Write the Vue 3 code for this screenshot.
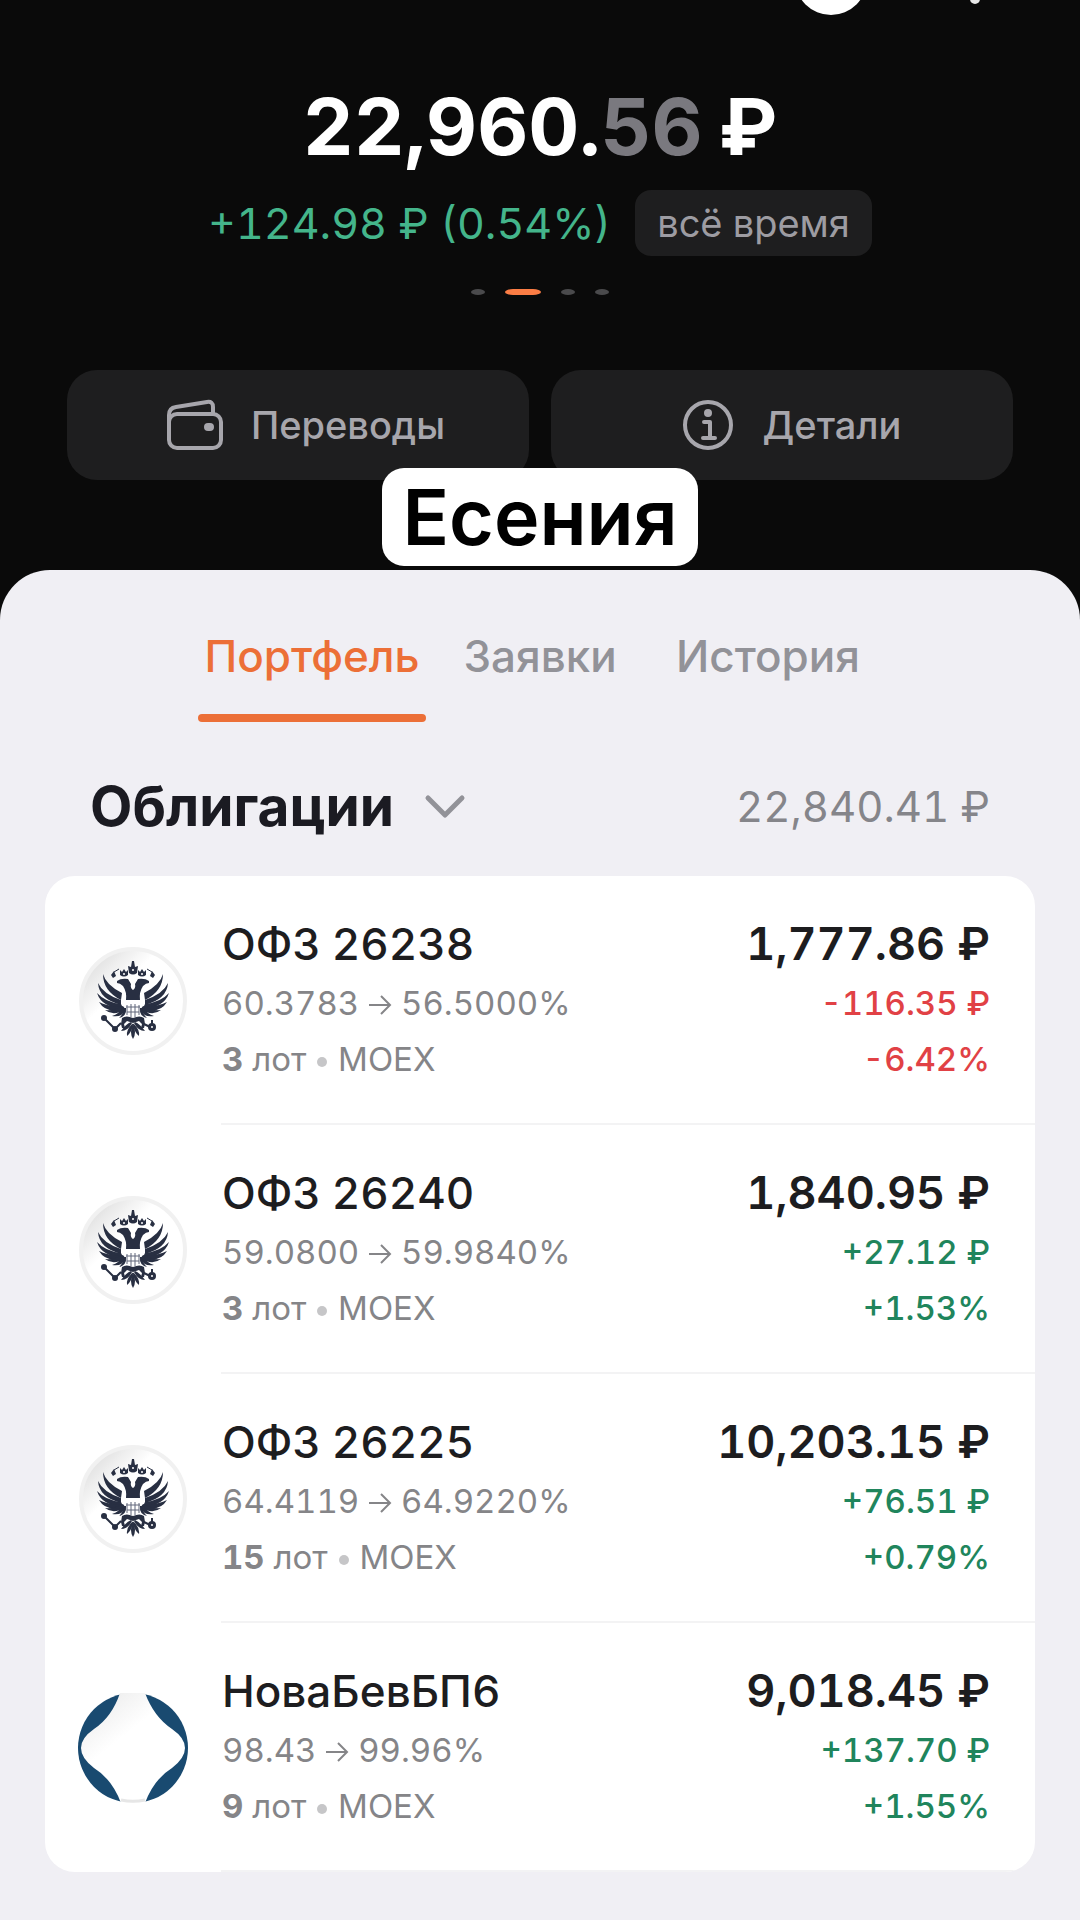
<template>
  <div class="app">
    <header class="top">
      <div class="status-bar">
        <svg width="60" height="15" viewBox="0 0 60 15">
          <circle cx="30" cy="-21" r="36" fill="#fff" />
        </svg>
        <svg width="10" height="4" viewBox="0 0 10 4">
          <circle cx="5" cy="-1" r="5" fill="#e8e8e8" />
        </svg>
      </div>

      <h1 class="balance">
        <span>22,960.<span class="cents">56</span></span>
        <span>₽</span>
      </h1>

      <div class="profit">
        <span>+124.98 ₽ (0.54%)</span>
        <button class="period" type="button">всё время</button>
      </div>

      <div class="dots">
        <span v-for="n in 4" :key="n" class="dot" :class="{ active: n === 2 }"></span>
      </div>

      <div class="actions">
        <button class="action" type="button">
          <svg class="action-icon" viewBox="0 0 56 56" fill="none" stroke="currentColor" stroke-width="4">
            <rect x="2" y="17" width="52" height="34" rx="8" />
            <path d="M2 25v-7q0-7 7-8l31-5q6-1 6 5v7" stroke-linejoin="round" />
            <rect x="37" y="26" width="10" height="8" rx="4" fill="currentColor" stroke="none" />
          </svg>
          Переводы
        </button>
        <button class="action" type="button">
          <svg class="action-icon" viewBox="0 0 56 56" fill="none" stroke="currentColor" stroke-width="4">
            <circle cx="29" cy="28" r="23" />
            <circle cx="29" cy="16" r="4" fill="currentColor" stroke="none" />
            <path d="M25 25h6v15M24 41h12" stroke-linecap="round" stroke-linejoin="round" />
          </svg>
          Детали
        </button>
      </div>

      <div class="name-tag">Есения</div>
    </header>

    <main class="sheet">
      <nav class="tabs">
        <button
          v-for="tab in tabs"
          :key="tab"
          type="button"
          class="tab"
          :class="{ active: tab === activeTab }"
          @click="activeTab = tab"
        >
          {{ tab }}
        </button>
      </nav>

      <div class="group-head">
        <button class="group-toggle" type="button" @click="opened = !opened">
          Облигации
          <svg width="42" height="26" viewBox="0 0 42 26" fill="none" stroke="#929298" stroke-width="5" stroke-linecap="round" stroke-linejoin="round">
            <path d="M4 5l17 17L38 5" />
          </svg>
        </button>
        <span class="group-total">22,840.41 ₽</span>
      </div>

      <ul v-if="opened" class="bonds">
        <li v-for="bond in bonds" :key="bond.name" class="bond">
          <svg v-if="bond.logo === 'eagle'" class="logo" viewBox="0 0 110 110">
            <defs>
              <linearGradient id="coin" x1="0.1" y1="0.1" x2="0.9" y2="0.9">
                <stop offset="0" stop-color="#dedede" />
                <stop offset="0.35" stop-color="#fff" />
              </linearGradient>
            </defs>
            <circle cx="55" cy="55" r="52" fill="url(#coin)" stroke="#f1f1f1" stroke-width="4" />
            <!-- wings, heads and crowns are mirrored around the middle -->
            <g v-for="side in mirror" :key="side" :transform="side" fill="#282f42">
              <path d="M25 28Q28 39 44 47L43 54Q25 45 25 28z" />
              <path d="M20 37Q25 48 43 54L43 59Q21 53 20 37z" />
              <path d="M19 47Q27 56 43 58L45 62Q24 62 19 47z" />
              <path d="M21 56Q30 61 44 60L46 63Q28 68 21 56z" />
              <path d="M27 64Q36 65 45 60L47 63Q36 71 27 64z" />
              <path d="M34 70Q41 68 45 61L48 63Q44 72 34 70z" />
              <path d="M41 72Q45 69 46 62L48 62Q49 70 41 72z" />
              <path d="M39 35Q43 32 50 33L53 38Q52 42 55 44V54H48Q49 46 45 40Q42 37 39 37z" />
              <path d="M42 24L44 26 46 23 48 26 50 24V29Q46 32 42 29z" />
              <path d="M33 29L36 25 38 30 35 32z" />
              <path d="M36 26L41 23" stroke="#282f42" stroke-width="1" />
              <path d="M44 72Q48 69 55 72V77L49 75 46 78 47 82 44 82 43 78z" />
              <path d="M53 76Q48 78 43 85 50 85 54 77z" />
              <path d="M54 78Q48 84 49 90 54 86 55 78z" />
            </g>
            <g fill="#282f42">
              <path d="M55 77Q51 87 55 93 59 87 55 77z" />
              <path d="M50 20L53 21 54 15H56L57 21 60 20 59 27Q55 30 51 27z" />
              <circle cx="26" cy="72" r="3" />
              <circle cx="37" cy="83" r="3" />
              <circle cx="74" cy="81" r="4" />
              <path d="M73 74h2v4h-2z" />
            </g>
            <path d="M26 72l11 11 6-6M74 82l-8-4" fill="none" stroke="#282f42" stroke-width="2" />
            <path d="M49 59v10M53 58v13M57 58v13M61 59v10M48 61h14M49 66h12" stroke="#60677a" stroke-width="1" />
            <g fill="#fff">
              <circle cx="46" cy="28" r="1" />
              <circle cx="64" cy="28" r="1" />
              <circle cx="55" cy="24" r="1" />
              <circle cx="74" cy="81" r="1" />
            </g>
          </svg>
          <svg v-else class="logo" viewBox="0 0 110 110">
            <defs>
              <linearGradient id="paper" x1="0.1" y1="0" x2="0.7" y2="0.8">
                <stop offset="0" stop-color="#e9e9e9" />
                <stop offset="0.5" stop-color="#fff" />
              </linearGradient>
            </defs>
            <circle cx="55" cy="55" r="55" fill="#194a70" />
            <path d="M42 0Q34 24 16 36 3 45 3 55t13 20q18 11 27 35h24q9-24 27-35 13-10 13-20T94 36Q76 24 67 0z" fill="url(#paper)" />
            <path d="M43 107a54 54 0 0 0 24 0" fill="none" stroke="#e6e6e6" stroke-width="3" />
          </svg>

          <div class="bond-body">
            <div class="info">
              <div class="bond-name">{{ bond.name }}</div>
              <div class="line">
                {{ bond.from }}
                <svg width="24" height="20" viewBox="0 0 24 20" fill="none" stroke="currentColor" stroke-width="2">
                  <path d="M1 10h21M13 1l9 9-9 9" />
                </svg>
                {{ bond.to }}
              </div>
              <div class="line">
                <b>{{ bond.lots }}</b> лот <i class="sep"></i> MOEX
              </div>
            </div>
            <div class="sums" :class="bond.down ? 'down' : 'up'">
              <div class="price">{{ bond.price }} ₽</div>
              <div class="line">{{ bond.diff }} ₽</div>
              <div class="line">{{ bond.percent }}</div>
            </div>
          </div>
        </li>
      </ul>
    </main>
  </div>
</template>

<script setup>
import { ref } from 'vue'

const tabs = ['Портфель', 'Заявки', 'История']
const activeTab = ref('Портфель')
const opened = ref(true)

const mirror = ['scale(1 1)', 'translate(110 0) scale(-1 1)']

const bonds = [
  { name: 'ОФЗ 26238', logo: 'eagle', from: '60.3783', to: '56.5000%', lots: 3, price: '1,777.86', diff: '-116.35', percent: '-6.42%', down: true },
  { name: 'ОФЗ 26240', logo: 'eagle', from: '59.0800', to: '59.9840%', lots: 3, price: '1,840.95', diff: '+27.12', percent: '+1.53%' },
  { name: 'ОФЗ 26225', logo: 'eagle', from: '64.4119', to: '64.9220%', lots: 15, price: '10,203.15', diff: '+76.51', percent: '+0.79%' },
  { name: 'НоваБевБП6', logo: 'nova', from: '98.43', to: '99.96%', lots: 9, price: '9,018.45', diff: '+137.70', percent: '+1.55%' },
]
</script>

<style>
body {
  margin: 0;
  background: #f0eff4;
}
</style>

<style scoped>
.app {
  background: #0a0a0a;
  font-family: Inter, 'Liberation Sans', sans-serif;
  font-variant-numeric: tabular-nums;
  color: #1d1d1f;
}

button {
  border: none;
  padding: 0;
  background: none;
  font: inherit;
  color: inherit;
  cursor: pointer;
}

.top {
  position: relative;
  display: flex;
  flex-direction: column;
  align-items: center;
  padding-bottom: 90px;
}

.status-bar {
  display: flex;
  justify-content: flex-end;
  align-items: flex-start;
  gap: 109px;
  width: 100%;
  height: 80px;
  padding-right: 100px;
  box-sizing: border-box;
}

.balance {
  display: flex;
  gap: 16px;
  margin: 0;
  font-size: 79px;
  font-weight: 700;
  line-height: 92px;
  color: #fff;
}

.cents {
  color: #7a797f;
}

.profit {
  display: flex;
  align-items: center;
  gap: 24px;
  margin-top: 18px;
  font-size: 43px;
  line-height: 52px;
  color: #44b58b;
}

.period {
  height: 66px;
  padding: 0 22px;
  border-radius: 16px;
  background: #1e1e1f;
  font-size: 38px;
  color: #9d9ca2;
}

.dots {
  display: flex;
  gap: 20px;
  margin-top: 33px;
}

.dot {
  width: 14px;
  height: 6px;
  border-radius: 50%;
  background: #4a4a4c;
}

.dot.active {
  width: 36px;
  border-radius: 8px / 3px;
  background: #fb7d45;
}

.actions {
  display: flex;
  gap: 22px;
  align-self: stretch;
  margin-top: 75px;
  padding: 0 67px;
}

.action {
  flex: 1;
  display: flex;
  align-items: center;
  justify-content: center;
  gap: 28px;
  height: 110px;
  padding-left: 16px;
  border-radius: 30px;
  background: #1e1e1f;
  font-size: 38px;
  font-weight: 500;
  color: #a7a6ac;
}

.action-icon {
  width: 56px;
  height: 56px;
}

.name-tag {
  position: absolute;
  bottom: 4px;
  padding: 0 20px;
  border-radius: 22px;
  background: #fff;
  font-size: 77px;
  font-weight: 600;
  line-height: 98px;
  color: #000;
}

.sheet {
  padding: 60px 45px 48px;
  border-radius: 50px 50px 0 0;
  background: #f0eff4;
}

.tabs {
  display: grid;
  grid-template-columns: repeat(3, 228px);
  justify-content: center;
}

.tab {
  font-size: 44px;
  font-weight: 500;
  line-height: 52px;
  text-align: center;
  color: #929298;
}

.tab::after {
  content: '';
  display: block;
  height: 8px;
  margin-top: 32px;
  border-radius: 4px;
}

.tab.active {
  color: #ec6f37;
}

.tab.active::after {
  background: #ec6f37;
}

.group-head {
  display: flex;
  justify-content: space-between;
  align-items: center;
  padding: 48px 45px 34px;
}

.group-toggle {
  display: flex;
  align-items: center;
  gap: 30px;
  font-size: 55px;
  font-weight: 700;
  line-height: 72px;
  color: #1b1b22;
}

.group-total {
  font-size: 42px;
  color: #85858a;
}

.bonds {
  margin: 0;
  padding: 0;
  border-radius: 30px;
  background: #fff;
  list-style: none;
  overflow: hidden;
}

.bond {
  display: flex;
  padding-left: 33px;
}

.logo {
  flex: none;
  width: 110px;
  height: 110px;
  margin-top: 70px;
}

.bond-body {
  flex: 1;
  display: flex;
  justify-content: space-between;
  margin-left: 33px;
  padding: 37px 45px 36px 1px;
  border-bottom: 2px solid #f3f3f4;
}

.bond-name,
.price {
  font-size: 44px;
  font-weight: 500;
  line-height: 62px;
}

.price {
  font-size: 45px;
  font-weight: 600;
  color: #1d1d1f;
}

.line {
  font-size: 33px;
  line-height: 56px;
  white-space: nowrap;
}

.info .line {
  color: #858588;
}

.sums {
  text-align: right;
}

.sums .line {
  font-weight: 500;
}

.up {
  color: #20855c;
}

.down {
  color: #e14145;
}

.sep {
  display: inline-block;
  width: 10px;
  height: 10px;
  margin: 0 2px;
  border-radius: 50%;
  background: #c6c6c8;
  vertical-align: middle;
}
</style>
